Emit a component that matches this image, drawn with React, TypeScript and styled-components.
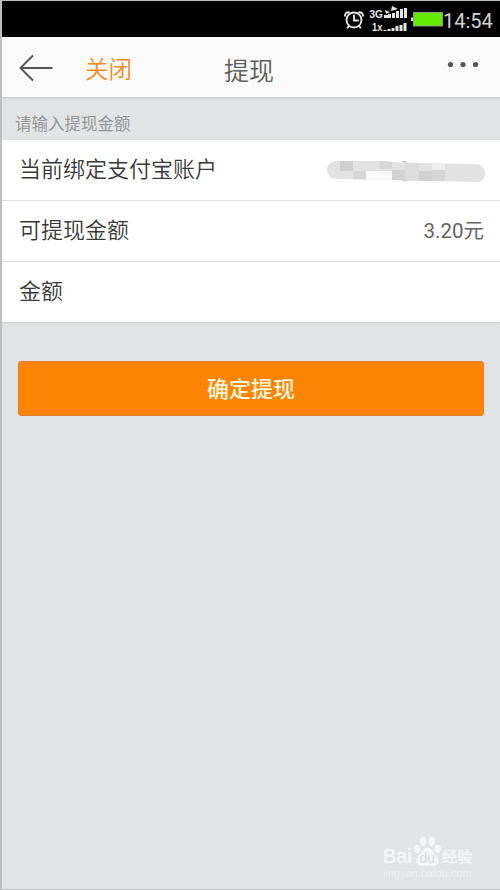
import React from "react";
import styled, { createGlobalStyle } from "styled-components";

const Global = createGlobalStyle`
  *, *::before, *::after { box-sizing: border-box; }
  body { margin: 0; background: #e2e3e5; }
  button { font: inherit; }
`;

const Screen = styled.div`
  position: relative;
  width: 500px;
  height: 890px;
  display: flex;
  flex-direction: column;
  background: #e2e3e5;
  border-left: 2px solid #bdbebf;
  border-top: 1px solid #bdbebf;
  border-bottom: 1px solid #bfc0c1;
  font-family: Roboto, "Noto Sans CJK SC", sans-serif;
  overflow: hidden;
`;

const StatusBar = styled.div`
  height: 36px;
  flex: none;
  background: #000;
  display: flex;
  justify-content: flex-end;
`;

const StatusIcons = styled.svg`
  width: 102px;
  height: 36px;
`;

const Clock = styled.span`
  width: 57px;
  color: #d2d2d2;
  font-size: 20px;
  line-height: 40px;
  white-space: nowrap;
`;

const Header = styled.header`
  height: 61px;
  flex: none;
  display: grid;
  grid-template-columns: 83px 138px 1fr 60px;
  background: #fafafa;
  border-bottom: 1px solid #cfd0d1;
  box-shadow: 0 1px 1px #d6d7d9;
`;

const HeaderIcon = styled.svg`
  width: 60px;
  height: 60px;
`;

const CloseLink = styled.span`
  color: #f58a1b;
  font-size: 23.5px;
  font-weight: 350;
  line-height: 66px;
`;

const Title = styled.h1`
  margin: 0;
  color: #5c5c5c;
  font-size: 25px;
  font-weight: 350;
  line-height: 69px;
  padding-left: 1px;
`;

const Hint = styled.p`
  margin: 0;
  height: 42px;
  flex: none;
  padding-left: 13px;
  color: #969798;
  font-size: 16.5px;
  line-height: 53px;
`;

const List = styled.div`
  flex: none;
  background: #fff;
  box-shadow: 0 1px 2px #cdced0;
`;

const Row = styled.div`
  height: 60px;
  display: flex;
  justify-content: space-between;
  padding: 0 14px 0 17px;
  color: #3a3a3a;
  font-size: 22px;
  font-weight: 350;
  line-height: 59px;

  & + & {
    height: 61px;
    border-top: 1px solid #e0e0e0;
    line-height: 60px;
  }
`;

const Amount = styled.span`
  color: #656565;
  font-size: 20.5px;
  font-weight: 400;
  padding-right: 2px;
`;

const Mask = styled.svg`
  width: 160px;
  height: 26px;
  margin-top: 20px;
`;

const Submit = styled.button`
  flex: none;
  height: 55px;
  margin: 39px 16px 0;
  padding: 0 0 3px;
  border: 1px solid #d88434;
  border-radius: 3px;
  background: #ff8403;
  color: #fff8df;
  font-size: 22px;
  font-weight: 500;
`;

const Watermark = styled.div`
  position: absolute;
  left: 381px;
  top: 835px;
  width: 92px;
  color: #f4f5f6;
`;

const Brand = styled.div`
  display: flex;
  align-items: flex-end;
  height: 32px;
  font-family: "Liberation Sans", "Noto Sans CJK SC", sans-serif;
  font-size: 20px;
  line-height: 23px;
  -webkit-text-stroke: 0.6px #f4f5f6;
`;

const Paw = styled.svg`
  width: 29px;
  height: 32px;
  margin: 0 0 1px 1px;
  flex: none;
`;

const BrandName = styled.span`
  font-size: 15px;
  white-space: nowrap;
`;

const SiteUrl = styled.div`
  color: #eeeff0;
  font: 10.8px/15px "Liberation Sans", sans-serif;
  margin-top: -2px;
  letter-spacing: 0.1px;
`;

const topBars = [4, 5, 7, 9, 10];
const bottomBars = [1, 2, 3, 5, 6, 8];
const tiles: [number, number, number, number, string][] = [
  [14, 0, 13, 10, "#cfcfcf"],
  [27, 10, 13, 10, "#d7d7d7"],
  [40, 10, 26, 10, "#f8f8f8"],
  [53, 0, 13, 8, "#d8d8d8"],
  [66, 9, 13, 12, "#d2d2d2"],
  [79, 2, 14, 19, "#dcdcdc"],
  [93, 10, 13, 11, "#d1d1d1"],
  [106, 2, 13, 7, "#eeeeee"],
  [106, 9, 13, 12, "#d7d7d7"],
];

export default function App() {
  return (
    <>
      <Global />
      <Screen>
        <StatusBar>
          <StatusIcons viewBox="341 1 102 36" aria-label="status">
            <g fill="none" stroke="#e6e6e6" strokeWidth="1.9" strokeLinecap="round">
              <circle cx="354" cy="20" r="7.5" />
              <path d="M354 15.5v5h4M345 15.8c0-2.4 1.7-3.7 3.8-3.6M363 15.8c0-2.4-1.7-3.7-3.8-3.6M349 26.2l-1.4 1.4M359 26.2l1.4 1.4" />
            </g>
            <g fill="#e6e6e6" fontFamily="Liberation Sans" fontWeight="700" fontSize="10.5">
              <text x="369.5" y="18" textLength="13.5" lengthAdjust="spacingAndGlyphs">3G</text>
              <text x="372" y="31" textLength="10.5" lengthAdjust="spacingAndGlyphs">1x</text>
              <path d="M384 15h4v3h-4zM385 10l5 2-4 2zM392 6l6 3-7 2z" />
              {topBars.map((h, i) => (
                <rect key={`t${i}`} x={388 + i * 4} y={18 - h} width="3" height={h} />
              ))}
              {bottomBars.map((h, i) => (
                <rect key={`b${i}`} x={383.5 + i * 4} y={31 - h} width="3" height={h} />
              ))}
            </g>
            <rect x="411" y="17.5" width="2" height="3.5" fill="#ddd" />
            <rect x="413.5" y="12.5" width="29" height="13.5" fill="#62e600" stroke="#8e9b83" />
            <rect x="415" y="14" width="26" height="10.5" fill="#64eb06" />
          </StatusIcons>
          <Clock>14:54</Clock>
        </StatusBar>
        <Header>
          <HeaderIcon viewBox="2 37 60 60" aria-label="back">
            <path d="M52.5 68H21M33 55.5L20.5 68L33 80.5" fill="none" stroke="#555" strokeWidth="1.9" />
          </HeaderIcon>
          <CloseLink>关闭</CloseLink>
          <Title>提现</Title>
          <HeaderIcon viewBox="440 37 60 60" aria-label="more">
            <g fill="#555">
              <circle cx="450.5" cy="64.5" r="2.6" />
              <circle cx="463" cy="64.5" r="2.6" />
              <circle cx="475.5" cy="64.5" r="2.6" />
            </g>
          </HeaderIcon>
        </Header>
        <Hint>请输入提现金额</Hint>
        <List>
          <Row>
            当前绑定支付宝账户
            <Mask viewBox="-1 -2 160 26">
              <clipPath id="smear">
                <path d="M9-1H53L80 1L149 2C161 3 161 20 149 20L106 19L79 18.5L53 17.5L9 17C-3 16-3 0 9-1Z" />
              </clipPath>
              <path d="M74-.2q4-1.5 7 1zM75 18q3 2.4 6 .5z" fill="#999" />
              <g clipPath="url(#smear)">
                <rect x="-1" y="-2" width="160" height="26" fill="#e2e2e2" />
                {tiles.map(([x, y, w, h, fill], i) => (
                  <rect key={i} x={x - 1} y={y - 1} width={w} height={h} fill={fill} />
                ))}
              </g>
            </Mask>
          </Row>
          <Row>
            可提现金额
            <Amount>3.20元</Amount>
          </Row>
          <Row>金额</Row>
        </List>
        <Submit>确定提现</Submit>
        <Watermark>
          <Brand>
            Bai
            <Paw viewBox="0 0 27 30">
              <g fill="#f4f5f6">
                <ellipse cx="4" cy="13" rx="3" ry="4" />
                <ellipse cx="9.5" cy="6" rx="3.2" ry="4.5" />
                <ellipse cx="17.5" cy="6" rx="3.2" ry="4.5" />
                <ellipse cx="23" cy="13" rx="3" ry="4" />
                <path d="M13.5 12c4 0 5 4 8 7c5 5 2 10-3 10h-10c-6 0-7-6-3-10c3-3 4-7 8-7Z" />
              </g>
              <text x="6" y="26" fontSize="13" fill="#d8dadc" stroke="none">du</text>
            </Paw>
            <BrandName>经验</BrandName>
          </Brand>
          <SiteUrl>jingyan.baidu.com</SiteUrl>
        </Watermark>
      </Screen>
    </>
  );
}
